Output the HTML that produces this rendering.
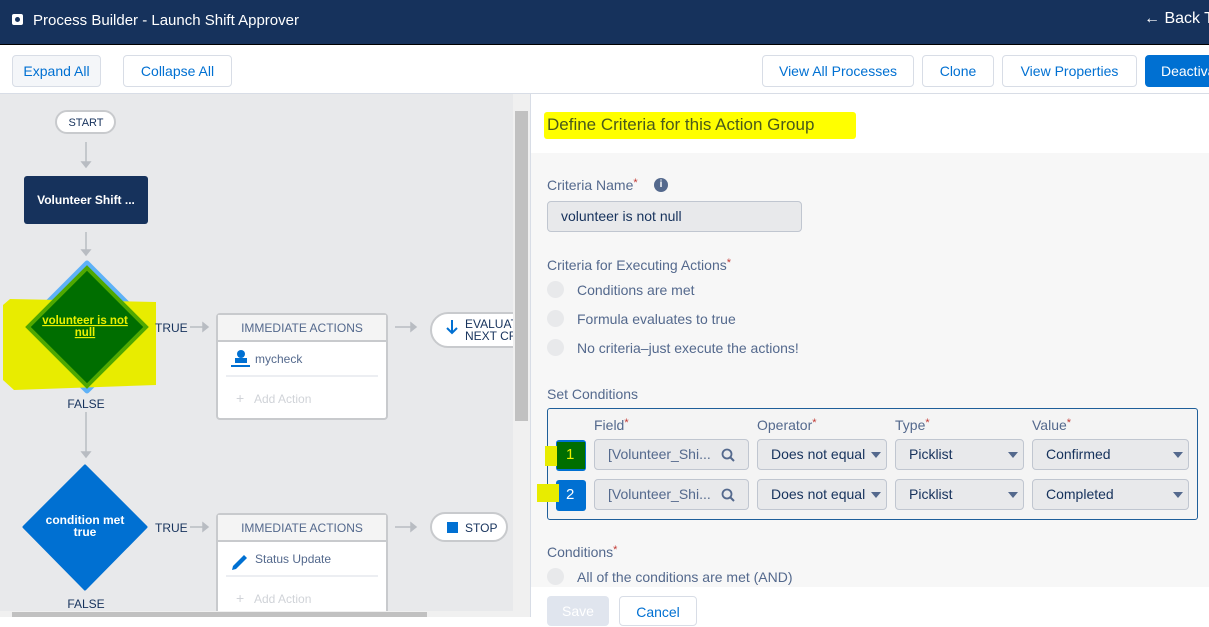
<!DOCTYPE html>
<html><head><meta charset="utf-8"><style>
*{box-sizing:border-box;margin:0;padding:0}
body{width:1209px;height:617px;overflow:hidden;font-family:"Liberation Sans",sans-serif;background:#fff;position:relative}
.a{position:absolute}
.btn{position:absolute;top:55px;height:32px;border:1px solid #d8dde6;border-radius:4px;background:#fff;color:#0070d2;font-size:14px;line-height:30px;text-align:center;white-space:nowrap;overflow:hidden}
.lbl{position:absolute;font-size:14px;color:#54698d;white-space:nowrap}
.req{color:#c23934;font-size:11px;vertical-align:top}
.radio{position:absolute;left:547px;width:17px;height:17px;border-radius:50%;background:#e8e9eb}
.inp{position:absolute;height:31px;border:1px solid #c0c6d0;border-radius:4px;background:#e8e9eb;font-size:14px;color:#16325c;line-height:29px;padding-left:13px;white-space:nowrap}
.tri{position:absolute;right:5px;top:12px;width:0;height:0;border-left:5px solid transparent;border-right:5px solid transparent;border-top:6px solid #54698d}
.mag{position:absolute;right:13px;top:8px}
</style></head><body>
<div class="a" style="left:0;top:0;width:1209px;height:44px;background:#16325c"></div>
<div class="a" style="left:0;top:44px;width:1209px;height:1px;background:#000"></div>
<div class="a" style="left:12px;top:14px;width:11px;height:11px;background:#fff;border-radius:2px"></div>
<div class="a" style="left:15px;top:17px;width:5px;height:5px;background:#16325c;border-radius:50%"></div>
<div class="a" style="left:33px;top:12px;color:#fff;font-size:15px;white-space:nowrap">Process Builder - Launch Shift Approver</div>
<div class="a" style="left:1144px;top:10px;color:#fff;font-size:16px;white-space:nowrap">&#8592; Back T</div>
<div class="btn" style="left:12px;width:89px;background:#f4f6f9">Expand All</div>
<div class="btn" style="left:123px;width:109px">Collapse All</div>
<div class="btn" style="left:762px;width:152px">View All Processes</div>
<div class="btn" style="left:922px;width:72px">Clone</div>
<div class="btn" style="left:1002px;width:135px">View Properties</div>
<div class="btn" style="left:1145px;width:80px;background:#0070d2;border-color:#0070d2;color:#fff;text-align:left;padding-left:15px">Deactivate</div>
<div class="a" style="left:0;top:93px;width:1209px;height:1px;background:#d8dde6"></div>
<!-- canvas -->
<div class="a" style="left:0;top:94px;width:513px;height:523px;background:#e8e9eb"></div>
<svg class="a" style="left:0;top:94px" width="513" height="523" viewBox="0 94 513 523" font-family="Liberation Sans, sans-serif">
<g stroke="#b8bcc2" stroke-width="1.5" fill="#b8bcc2">
<line x1="86" y1="142" x2="86" y2="164"/><path d="M82 162l4 5 4-5z"/>
<line x1="86" y1="232" x2="86" y2="252"/><path d="M82 250l4 5 4-5z"/>
<line x1="86" y1="412" x2="86" y2="454"/><path d="M82 452l4 5 4-5z"/>
<line x1="190" y1="327" x2="206" y2="327"/><path d="M203 323l5 4-5 4z"/>
<line x1="190" y1="527" x2="206" y2="527"/><path d="M203 523l5 4-5 4z"/>
<line x1="395" y1="327" x2="413" y2="327"/><path d="M411 323l5 4-5 4z"/>
<line x1="395" y1="527" x2="413" y2="527"/><path d="M411 523l5 4-5 4z"/>
</g>
<rect x="56" y="111" width="59" height="22" rx="11" fill="#fff" stroke="#c8cacd" stroke-width="2"/>
<text x="86" y="126" font-size="11" fill="#16325c" text-anchor="middle">START</text>
<rect x="24" y="176" width="124" height="48" rx="3" fill="#16325c"/>
<text x="86" y="204" font-size="12" fill="#fff" text-anchor="middle" font-weight="bold">Volunteer Shift ...</text>
<path d="M87 263L151 327 87 391 23 327Z" fill="#0070d2" stroke="#5eb1f7" stroke-width="5" stroke-linejoin="round"/>
<path d="M10 299L156 302 156 385 14 390 3 380 3 305Z" fill="#e8ec00"/>
<path d="M87 268L146 327 87 386 28 327Z" fill="#006e00" stroke="#4fa800" stroke-width="4"/>
<text x="85" y="324" font-size="11.5" fill="#ecf000" text-anchor="middle" font-weight="bold" text-decoration="underline">volunteer is not</text>
<text x="85" y="336" font-size="11.5" fill="#ecf000" text-anchor="middle" font-weight="bold" text-decoration="underline">null</text>
<text x="155" y="332" font-size="12" fill="#16325c">TRUE</text>
<text x="86" y="408" font-size="12" fill="#16325c" text-anchor="middle">FALSE</text>
<path d="M85 466L146 527 85 589 24 527Z" fill="#0070d2" stroke="#0070d2" stroke-width="3" stroke-linejoin="round"/>
<text x="85" y="524" font-size="12" fill="#fff" text-anchor="middle" font-weight="bold">condition met</text>
<text x="85" y="536" font-size="12" fill="#fff" text-anchor="middle" font-weight="bold">true</text>
<text x="155" y="532" font-size="12" fill="#16325c">TRUE</text>
<text x="86" y="608" font-size="12" fill="#16325c" text-anchor="middle">FALSE</text>
<g>
<rect x="217" y="314" width="170" height="105" rx="3" fill="#fff" stroke="#c8cacd" stroke-width="2"/>
<rect x="218" y="315" width="168" height="26" fill="#f4f4f4"/><line x1="218" y1="341" x2="386" y2="341" stroke="#c8cacd" stroke-width="2"/>
<text x="302" y="332" font-size="12" fill="#54698d" text-anchor="middle">IMMEDIATE ACTIONS</text>
<circle cx="241" cy="354" r="4" fill="#0070d2"/><rect x="235" y="358" width="12" height="5" fill="#0070d2"/><rect x="231" y="365" width="19" height="2" fill="#0070d2"/>
<text x="255" y="363" font-size="12" fill="#54698d">mycheck</text>
<line x1="226" y1="376" x2="378" y2="376" stroke="#d8dde6"/>
<text x="236" y="403" font-size="14" fill="#d0d3d8">+</text><text x="254" y="403" font-size="12" fill="#d0d3d8">Add Action</text>
</g>
<g>
<rect x="217" y="514" width="170" height="110" rx="3" fill="#fff" stroke="#c8cacd" stroke-width="2"/>
<rect x="218" y="515" width="168" height="26" fill="#f4f4f4"/><line x1="218" y1="541" x2="386" y2="541" stroke="#c8cacd" stroke-width="2"/>
<text x="302" y="532" font-size="12" fill="#54698d" text-anchor="middle">IMMEDIATE ACTIONS</text>
<path d="M233 566l11-11 3 3-11 11-4 1z" fill="#0070d2"/>
<text x="255" y="563" font-size="12" fill="#54698d">Status Update</text>
<line x1="226" y1="576" x2="378" y2="576" stroke="#d8dde6"/>
<text x="236" y="603" font-size="14" fill="#d0d3d8">+</text><text x="254" y="603" font-size="12" fill="#d0d3d8">Add Action</text>
</g>
<rect x="431" y="313" width="120" height="34" rx="17" fill="#fff" stroke="#c8cacd" stroke-width="2"/>
<path d="M452 320v12M447 328l5 5 5-5" stroke="#0070d2" stroke-width="2" fill="none"/>
<text x="465" y="328" font-size="12" fill="#16325c">EVALUATE</text><text x="465" y="340" font-size="12" fill="#16325c">NEXT CRITERIA</text>
<rect x="431" y="513" width="76" height="28" rx="14" fill="#fff" stroke="#c8cacd" stroke-width="2"/>
<rect x="447" y="522" width="11" height="11" fill="#0070d2"/>
<text x="465" y="532" font-size="12" fill="#16325c">STOP</text>
</svg>
<div class="a" style="left:0;top:611px;width:513px;height:6px;background:#f0f0f0"></div>
<div class="a" style="left:12px;top:612px;width:415px;height:5px;background:#c1c1c1"></div>
<div class="a" style="left:513px;top:94px;width:17px;height:523px;background:#f0f0f0"></div>
<div class="a" style="left:515px;top:111px;width:13px;height:310px;background:#c1c1c1"></div>
<!-- right panel -->
<div class="a" style="left:530px;top:94px;width:679px;height:523px;background:#f7f7f7;border-left:1px solid #d8dde6"></div>
<div class="a" style="left:531px;top:94px;width:678px;height:59px;background:#fff"></div>
<div class="a" style="left:544px;top:112px;width:312px;height:27px;background:#ffff00;border-radius:3px"></div>
<div class="a" style="left:547px;top:115px;font-size:17px;color:#4a5a1a;white-space:nowrap">Define Criteria for this Action Group</div>
<div class="lbl" style="left:547px;top:177px">Criteria Name<span class="req">*</span></div>
<div class="a" style="left:654px;top:178px;width:14px;height:14px;border-radius:50%;background:#54698d;color:#fff;font-size:10px;font-weight:bold;text-align:center;line-height:14px">i</div>
<div class="inp" style="left:547px;top:201px;width:255px">volunteer is not null</div>
<div class="lbl" style="left:547px;top:257px">Criteria for Executing Actions<span class="req">*</span></div>
<div class="radio" style="top:281px"></div><div class="lbl" style="left:577px;top:282px">Conditions are met</div>
<div class="radio" style="top:310px"></div><div class="lbl" style="left:577px;top:311px">Formula evaluates to true</div>
<div class="radio" style="top:339px"></div><div class="lbl" style="left:577px;top:340px">No criteria–just execute the actions!</div>
<div class="lbl" style="left:547px;top:386px">Set Conditions</div>
<div class="a" style="left:547px;top:408px;width:651px;height:112px;border:1px solid #1f5f9a;border-radius:3px;background:#f4f4f4"></div>
<div class="lbl" style="left:594px;top:417px">Field<span class="req">*</span></div>
<div class="lbl" style="left:757px;top:417px">Operator<span class="req">*</span></div>
<div class="lbl" style="left:895px;top:417px">Type<span class="req">*</span></div>
<div class="lbl" style="left:1032px;top:417px">Value<span class="req">*</span></div>
<div class="a" style="left:556px;top:440px;width:30px;height:31px;background:#0070d2;border-radius:3px"></div>
<div class="a" style="left:545px;top:446px;width:26px;height:20px;background:#e8ec00"></div>
<div class="a" style="left:557px;top:442px;width:28px;height:27px;background:#006e00"></div>
<div class="a" style="left:566px;top:446px;font-size:15px;color:#ecf000">1</div>
<div class="a" style="left:556px;top:480px;width:30px;height:31px;background:#0070d2;border-radius:3px"></div>
<div class="a" style="left:537px;top:484px;width:22px;height:18px;background:#e8ec00"></div>
<div class="a" style="left:566px;top:486px;font-size:15px;color:#fff">2</div>
<div class="inp" style="left:594px;top:439px;width:155px;color:#54698d">[Volunteer_Shi... <svg class="mag" width="14" height="14"><circle cx="6" cy="6" r="4.5" stroke="#54698d" stroke-width="1.8" fill="none"/><path d="M9 9l4 4" stroke="#54698d" stroke-width="2"/></svg></div>
<div class="inp" style="left:757px;top:439px;width:130px">Does not equal<span class="tri"></span></div>
<div class="inp" style="left:895px;top:439px;width:129px">Picklist<span class="tri"></span></div>
<div class="inp" style="left:1032px;top:439px;width:157px">Confirmed<span class="tri"></span></div>
<div class="inp" style="left:594px;top:479px;width:155px;color:#54698d">[Volunteer_Shi... <svg class="mag" width="14" height="14"><circle cx="6" cy="6" r="4.5" stroke="#54698d" stroke-width="1.8" fill="none"/><path d="M9 9l4 4" stroke="#54698d" stroke-width="2"/></svg></div>
<div class="inp" style="left:757px;top:479px;width:130px">Does not equal<span class="tri"></span></div>
<div class="inp" style="left:895px;top:479px;width:129px">Picklist<span class="tri"></span></div>
<div class="inp" style="left:1032px;top:479px;width:157px">Completed<span class="tri"></span></div>
<div class="lbl" style="left:547px;top:544px">Conditions<span class="req">*</span></div>
<div class="radio" style="top:568px"></div><div class="lbl" style="left:577px;top:569px">All of the conditions are met (AND)</div>
<div class="a" style="left:531px;top:587px;width:678px;height:30px;background:#fff"></div>
<div class="a" style="left:547px;top:596px;width:62px;height:30px;background:#e0e5ee;border-radius:4px;color:#fff;font-size:14px;text-align:center;line-height:30px">Save</div>
<div class="a" style="left:619px;top:596px;width:78px;height:30px;background:#fff;border:1px solid #d8dde6;border-radius:4px;color:#0070d2;font-size:14px;text-align:center;line-height:30px">Cancel</div>
</body></html>
